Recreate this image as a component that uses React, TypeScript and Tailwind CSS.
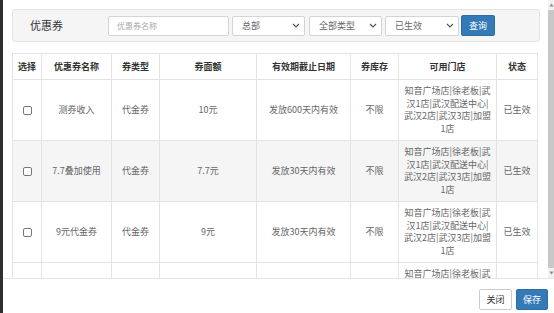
const stores = ["知音广场店|徐老板|武", "汉1店|武汉配送中心|", "武汉2店|武汉3店|加盟", "1店"];

const coupons = [
  { name: "测券收入", type: "代金券", amount: "10元", expire: "发放600天内有效" },
  { name: "7.7叠加使用", type: "代金券", amount: "7.7元", expire: "发放30天内有效" },
  { name: "9元代金券", type: "代金券", amount: "9元", expire: "发放30天内有效" },
  { name: "", type: "", amount: "", expire: "", noCheck: true },
];

const columns = [
  { label: "选择", w: "w-[29px]" },
  { label: "优惠券名称", w: "w-[70px]" },
  { label: "券类型", w: "w-[48px]" },
  { label: "券面额", w: "w-[97px]" },
  { label: "有效期截止日期", w: "w-[94px]" },
  { label: "券库存", w: "w-[48px]" },
  { label: "可用门店", w: "w-[98px]" },
  { label: "状态", w: "w-[41px]" },
];

const Chevron = () => (
  <svg width="8" height="5" viewBox="0 0 8 5" className="shrink-0">
    <path d="M1 1l3 3 3-3" fill="none" stroke="#555" strokeWidth="1.2" />
  </svg>
);

const FakeSelect = ({ label, w }: { label: string; w: string }) => (
  <div className={`flex h-[20px] ${w} items-center justify-between rounded-[2px] border border-[#d4d4d4] bg-white pl-[9px] pr-[4px] text-[9px] text-[#666]`}>
    <span>{label}</span>
    <Chevron />
  </div>
);

export default function App() {
  return (
    <div className="flex h-[313px] w-[554px] overflow-hidden bg-white font-['Noto_Sans_CJK_SC',sans-serif] text-[#666]">
      <div className="w-[3px] bg-[#2f2f2f]" />
      <div className="flex min-w-0 flex-1 flex-col">
        <div className="flex h-[278px] overflow-hidden">
          <div className="min-w-0 flex-1 pl-[9px] pr-[8px] pt-[9px]">
            <div className="flex h-[33px] items-center rounded-[3px] border border-[#e3e3e3] bg-[#f5f5f5]">
              <div className="w-[95px] pl-[17px] text-[11px] text-[#333]">优惠券</div>
              <div className="flex h-[20px] w-[121px] items-center rounded-[2px] border border-[#d4d4d4] bg-white pl-[8px] text-[8px] text-[#aaa]">
                优惠券名称
              </div>
              <div className="ml-[3px]"><FakeSelect label="总部" w="w-[73px]" /></div>
              <div className="ml-[4px]"><FakeSelect label="全部类型" w="w-[73px]" /></div>
              <div className="ml-[3px]"><FakeSelect label="已生效" w="w-[74px]" /></div>
              <button className="ml-[2px] h-[21px] w-[34px] rounded-[2px] border border-[#2e6da4] bg-[#337ab7] text-[9px] text-white">
                查询
              </button>
            </div>

            <table className="mt-[11px] w-[525px] table-fixed border-collapse border border-[#e3e3e3] text-center text-[9px]">
              <thead>
                <tr className="h-[26px]">
                  {columns.map((c) => (
                    <th key={c.label} className={`${c.w} border border-[#e3e3e3] font-semibold text-[#333]`}>
                      {c.label}
                    </th>
                  ))}
                </tr>
              </thead>
              <tbody>
                {coupons.map((c, i) => (
                  <tr key={i} className={i === 1 ? "bg-[#f5f5f5]" : "bg-white"}>
                    <td className="border border-[#e3e3e3]">
                      {!c.noCheck && (
                        <span className="mx-auto block h-[9px] w-[9px] rounded-[2px] border border-[#777] bg-white" />
                      )}
                    </td>
                    <td className="border border-[#e3e3e3]">{c.name}</td>
                    <td className="border border-[#e3e3e3]">{c.type}</td>
                    <td className="border border-[#e3e3e3]">{c.amount}</td>
                    <td className="border border-[#e3e3e3]">{c.expire}</td>
                    <td className="border border-[#e3e3e3]">{c.noCheck ? "" : "不限"}</td>
                    <td className="border border-[#e3e3e3] px-[4px] py-[5px] leading-[12.5px]">
                      {stores.map((s) => (
                        <div key={s}>{s}</div>
                      ))}
                    </td>
                    <td className="border border-[#e3e3e3]">{c.noCheck ? "" : "已生效"}</td>
                  </tr>
                ))}
              </tbody>
            </table>
          </div>

          <div className="flex w-[6px] flex-col items-center bg-[#f1f1f1]">
            <svg width="5" height="4" viewBox="0 0 5 4" className="mt-[3px]">
              <path d="M2.5 0.5L4.5 3.5H0.5z" fill="#888" />
            </svg>
            <div className="mt-[3px] w-full flex-1 bg-[#c8c8c8]" />
            <svg width="5" height="4" viewBox="0 0 5 4" className="mb-[3px] mt-[3px]">
              <path d="M2.5 3.5L4.5 0.5H0.5z" fill="#888" />
            </svg>
          </div>
        </div>

        <div className="flex flex-1 items-start justify-end gap-[4px] border-t border-[#e5e5e5] pr-[6px] pt-[10px]">
          <button className="h-[21px] w-[33px] rounded-[2px] border border-[#ccc] bg-white text-[9px] text-[#333]">
            关闭
          </button>
          <button className="h-[21px] w-[32px] rounded-[2px] border border-[#2e6da4] bg-[#337ab7] text-[9px] text-white">
            保存
          </button>
        </div>
      </div>
    </div>
  );
}
